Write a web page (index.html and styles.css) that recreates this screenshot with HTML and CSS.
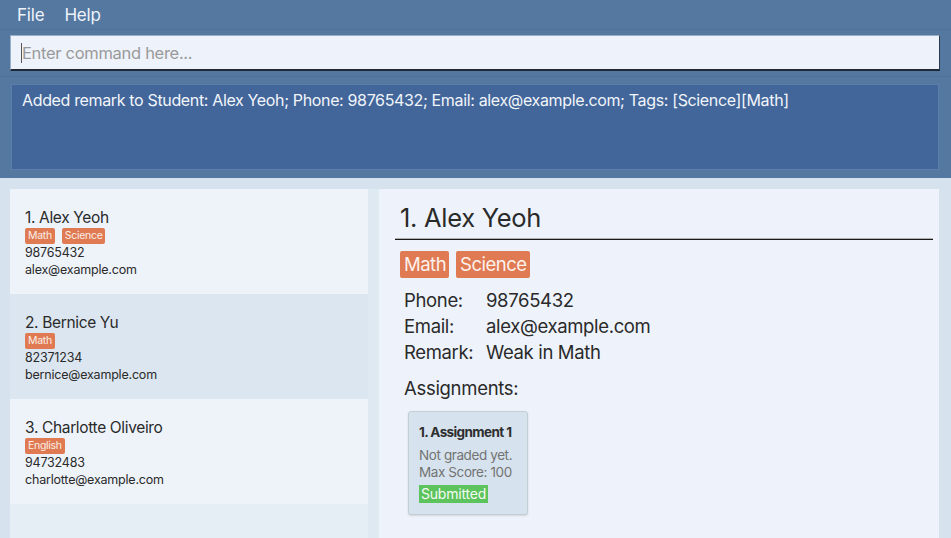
FILE: index.html
```html
<!DOCTYPE html>
<html>
<head>
<meta charset="utf-8">
<link rel="stylesheet" href="styles.css">
</head>
<body>
<div class="app">
  <div class="menubar">
    <span class="menu-item">File</span>
    <span class="menu-item">Help</span>
  </div>
  <div class="cmd-area">
    <div class="cmd-box"><span class="caret"></span><span class="placeholder">Enter command here...</span></div>
  </div>
  <div class="result-area">
    <div class="result-box">Added remark to Student: Alex Yeoh; Phone: 98765432; Email: alex@example.com; Tags: [Science][Math]</div>
  </div>
  <div class="main">
    <div class="list">
      <div class="card">
        <div class="name">1. Alex Yeoh</div>
        <div class="tags"><span class="tag">Math</span><span class="tag">Science</span></div>
        <div class="line">98765432</div>
        <div class="line">alex@example.com</div>
      </div>
      <div class="card alt">
        <div class="name">2. Bernice Yu</div>
        <div class="tags"><span class="tag">Math</span></div>
        <div class="line">82371234</div>
        <div class="line">bernice@example.com</div>
      </div>
      <div class="card">
        <div class="name">3. Charlotte Oliveiro</div>
        <div class="tags"><span class="tag">English</span></div>
        <div class="line">94732483</div>
        <div class="line">charlotte@example.com</div>
      </div>
      <div class="list-rest"></div>
    </div>
    <div class="divider"></div>
    <div class="detail">
      <div class="d-header"><div class="d-name">1. Alex Yeoh</div></div>
      <div class="d-tags"><span class="d-tag">Math</span><span class="d-tag">Science</span></div>
      <div class="d-fields">
        <span class="lbl">Phone:</span><span class="val">98765432</span>
        <span class="lbl">Email:</span><span class="val">alex@example.com</span>
        <span class="lbl">Remark:</span><span class="val">Weak in Math</span>
      </div>
      <div class="d-assign">Assignments:</div>
      <div class="a-card">
        <div class="a-title">1. Assignment 1</div>
        <div class="a-body">
          <div class="a-line">Not graded yet.</div>
          <div class="a-line">Max Score: 100</div>
        </div>
        <span class="a-status">Submitted</span>
      </div>
    </div>
    <div class="right-edge"></div>
  </div>
</div>
</body>
</html>
```

FILE: styles.css
```css
html, body {
  margin: 0;
  padding: 0;
}
body {
  width: 951px;
  height: 538px;
  overflow: hidden;
  font-family: Inter, "Open Sans", "Liberation Sans", sans-serif;
}
.app {
  display: flex;
  flex-direction: column;
  height: 538px;
  background: #5578a1;
}
.menubar {
  height: 30px;
  display: flex;
  align-items: center;
  padding-left: 17px;
  gap: 20px;
  border-bottom: 1px solid #4e7099;
  box-sizing: border-box;
}
.menu-item {
  color: #eef3fa;
  font-size: 17px;
  letter-spacing: -0.2px;
}
.cmd-area {
  padding: 5px 11px 5px 10px;
  height: 47px;
  box-sizing: border-box;
  border-bottom: 1px solid #4e7099;
}
.cmd-box {
  height: 36px;
  box-sizing: border-box;
  background: #eef3fb;
  border-top: 1px solid #9ab0c8;
  border-left: 1px solid #9ab0c8;
  border-right: 1px solid #2b3a4d;
  border-bottom: 2px solid #1f2a36;
  display: flex;
  align-items: center;
  padding-left: 10px;
}
.caret {
  width: 1px;
  height: 20px;
  background: #555;
}
.placeholder {
  color: #9a9a9a;
  font-size: 16.5px;
  letter-spacing: -0.3px;
}
.result-area {
  height: 101px;
  padding: 7px 12px 7px 11px;
  box-sizing: border-box;
}
.result-box {
  height: 86px;
  box-sizing: border-box;
  background: #42669a;
  border: 1px solid #5a7fab;
  color: #f2f5fa;
  font-size: 16px;
  letter-spacing: -0.35px;
  padding: 5px 0 0 10px;
}
.main {
  flex: 1;
  background: #d6e3ee;
  display: flex;
  padding-top: 11px;
  padding-left: 10px;
}
.list {
  width: 358px;
  display: flex;
  flex-direction: column;
}
.card {
  height: 105px;
  box-sizing: border-box;
  background: #eef3fa;
  padding: 19px 0 0 15px;
  color: #2a2a2a;
}
.card.alt {
  background: #dbe6f0;
}
.list-rest {
  flex: 1;
  background: #e5edf5;
}
.name {
  font-size: 15.5px;
  line-height: 20px;
  letter-spacing: -0.35px;
}
.tags {
  display: flex;
  gap: 7px;
  height: 16px;
}
.tag {
  background: #df7a52;
  color: #fbeee8;
  font-size: 10.5px;
  line-height: 16px;
  padding: 0 3px;
  border-radius: 2px;
  letter-spacing: -0.3px;
}
.line {
  font-size: 12.5px;
  line-height: 17px;
  letter-spacing: -0.2px;
}
.divider {
  width: 11px;
  background: #dfe9f2;
}
.detail {
  width: 560px;
  background: #eef3fb;
  padding: 0 6px 0 16px;
  box-sizing: border-box;
  color: #2a2a2a;
}
.d-header {
  padding-top: 13px;
  border-bottom: 1px solid #1a1a1a;
  box-shadow: 0 -1px 0 #b0b0b0 inset;
  height: 51px;
  box-sizing: border-box;
}
.d-name {
  font-size: 25.5px;
  line-height: 32px;
  padding-left: 5px;
  letter-spacing: -0.3px;
}
.d-tags {
  display: flex;
  gap: 7px;
  margin-top: 11px;
  padding-left: 5px;
}
.d-tag {
  background: #df7a52;
  color: #fdf1ec;
  font-size: 18.5px;
  line-height: 27px;
  padding: 0 3px 0 4px;
  border-radius: 2px;
  letter-spacing: -0.5px;
}
.d-fields {
  display: grid;
  grid-template-columns: 82px auto;
  margin-top: 9px;
  padding-left: 9px;
  font-size: 18.5px;
  line-height: 26px;
  letter-spacing: -0.35px;
}
.d-assign {
  margin-top: 10px;
  padding-left: 9px;
  font-size: 18.5px;
  line-height: 26px;
  letter-spacing: -0.3px;
}
.a-card {
  margin: 10px 0 0 13px;
  width: 120px;
  height: 104px;
  box-sizing: border-box;
  background: #d6e3ee;
  border: 1px solid #c4ccd4;
  border-radius: 3px;
  box-shadow: 0 1px 2px rgba(0,0,0,0.12);
  padding: 11px 0 0 10px;
}
.a-title {
  font-weight: 700;
  font-size: 13.5px;
  line-height: 19px;
  letter-spacing: -0.6px;
  color: #2e2e2e;
}
.a-body {
  margin-top: 5px;
}
.a-line {
  color: #737373;
  font-size: 13.5px;
  line-height: 17px;
  letter-spacing: -0.4px;
}
.a-status {
  display: inline-block;
  margin-top: 4px;
  background: #5dc35d;
  color: #f4fbf4;
  font-size: 14px;
  line-height: 18px;
  padding: 0 2px 0 2px;
  letter-spacing: -0.2px;
}
.right-edge {
  width: 12px;
  background: #d6e3ee;
}
```
